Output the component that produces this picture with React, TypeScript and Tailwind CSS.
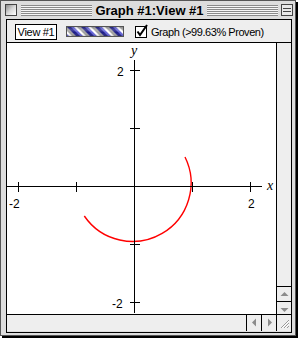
import React from "react";

function Stripes() {
  return (
    <div className="h-[11px] flex-1 bg-[repeating-linear-gradient(to_bottom,#8a8a8a_0px,#8a8a8a_1px,#f6f6f6_1px,#f6f6f6_2px)]" />
  );
}

function BarberPole() {
  return (
    <svg width="58" height="11" className="block">
      <defs>
        <pattern id="pole" width="14" height="11" patternUnits="userSpaceOnUse" patternTransform="skewX(45)">
          <rect x="0" y="0" width="4" height="11" fill="#1c1c86" />
          <rect x="4" y="0" width="3" height="11" fill="#6262d8" />
          <rect x="7" y="0" width="3" height="11" fill="#ffffff" />
          <rect x="10" y="0" width="4" height="11" fill="#a0a0a0" />
        </pattern>
        <linearGradient id="shade" x1="0" y1="0" x2="0" y2="1">
          <stop offset="0" stopColor="#000" stopOpacity="0.2" />
          <stop offset="0.35" stopColor="#fff" stopOpacity="0.2" />
          <stop offset="0.6" stopColor="#fff" stopOpacity="0" />
          <stop offset="1" stopColor="#000" stopOpacity="0.3" />
        </linearGradient>
      </defs>
      <rect x="0" y="0" width="58" height="11" fill="url(#pole)" />
      <rect x="0" y="0" width="58" height="11" fill="url(#shade)" />
      <rect x="0.5" y="0.5" width="57" height="10" fill="none" stroke="#555" />
    </svg>
  );
}

function CheckBox() {
  return (
    <svg width="14" height="13" className="block overflow-visible">
      <rect x="0.5" y="1.5" width="11" height="11" fill="#fff" stroke="#000" />
      <path d="M2.5 6.5 L5 10 L12 0" fill="none" stroke="#000" strokeWidth="2" />
    </svg>
  );
}

function Arrow({ dir }: { dir: "up" | "down" | "left" | "right" }) {
  const d = {
    up: "M3.5 9 L7.5 5 L11.5 9 Z",
    down: "M3.5 6 L7.5 10 L11.5 6 Z",
    left: "M9 3.5 L5 7.5 L9 11.5 Z",
    right: "M6 3.5 L10 7.5 L6 11.5 Z",
  }[dir];
  return (
    <svg width="14" height="14" className="block">
      <path d={d} fill="#8c8c8c" />
    </svg>
  );
}

function Plot() {
  const ox = 127.5;
  const oy = 143.5;
  const u = 58;
  const xt = [-2, -1, 1, 2];
  return (
    <svg width="269" height="271" className="block">
      <path d="M 178 114 A 58.5 58.5 0 0 1 77.3 173" fill="none" stroke="#ff0000" strokeWidth="1.4" />
      <g stroke="#000" strokeWidth="1" shapeRendering="crispEdges">
        <line x1="0" y1={oy} x2="255" y2={oy} />
        <line x1={ox} y1="17" x2={ox} y2="270" />
        {xt.map((t) => (
          <line key={"x" + t} x1={ox + t * u} y1={oy - 5} x2={ox + t * u} y2={oy + 5} />
        ))}
        {xt.map((t) => (
          <line key={"y" + t} x1={ox - 5} y1={oy - t * u} x2={ox + 5} y2={oy - t * u} />
        ))}
      </g>
      <g fontFamily="'Liberation Sans', Arial, sans-serif" fontSize="12" fill="#000">
        <text x="2" y="165">-2</text>
        <text x="241" y="165">2</text>
        <text x="110" y="33">2</text>
        <text x="105" y="265">-2</text>
      </g>
      <g fontFamily="'Liberation Serif', 'Times New Roman', serif" fontStyle="italic" fontSize="14" fill="#000">
        <text x="260" y="147">x</text>
        <text x="124" y="12">y</text>
      </g>
    </svg>
  );
}

export default function App() {
  return (
    <div className="h-[338px] w-[298px] bg-white font-['Liberation_Sans',Arial,sans-serif]">
      <div className="flex h-[336px] w-[296px] flex-col border border-[#555] bg-[#dddddd] shadow-[2px_2px_0_0_#000]">
        {/* title bar */}
        <div className="flex h-[18px] items-center pl-[4px] pr-[2px]">
          <div className="h-[12px] w-[12px] border border-[#444] bg-gradient-to-br from-[#8a8a8a] via-[#d8d8d8] to-[#ffffff]" />
          <div className="ml-[4px] flex flex-1 items-center">
            <Stripes />
            <span className="px-[3px] text-[13px] font-bold leading-none text-black">Graph #1:View #1</span>
            <Stripes />
          </div>
          <div className="ml-[3px] flex h-[12px] w-[12px] flex-col justify-center gap-[2px] border border-[#444] bg-[#e8e8e8] px-[1px]">
            <div className="h-[1px] bg-[#444]" />
            <div className="h-[1px] bg-[#444]" />
          </div>
        </div>

        {/* content */}
        <div className="mb-[2px] ml-[5px] mr-[3px] flex flex-1 flex-col border border-black">
          {/* toolbar */}
          <div className="flex h-[23px] items-start border-b border-black bg-[#eeeeee] pl-[8px] text-[11px] leading-none text-black">
            <div className="mt-[4px] flex h-[16px] w-[42px] items-center justify-center border border-black bg-white tracking-[-0.3px]">
              View #1
            </div>
            <div className="ml-[9px] mt-[6px]">
              <BarberPole />
            </div>
            <div className="ml-[11px] mt-[5px]">
              <CheckBox />
            </div>
            <span className="ml-[2px] mt-[7px] tracking-[-0.45px]">Graph (&gt;99.63% Proven)</span>
          </div>

          {/* plot + vertical scrollbar */}
          <div className="flex h-[271px]">
            <div className="flex-1 bg-white">
              <Plot />
            </div>
            <div className="flex w-[15px] flex-col border-l border-black bg-[#eeeeee]">
              <div className="flex-1" />
              <div className="h-[15px] border-t border-black">
                <Arrow dir="up" />
              </div>
              <div className="h-[13px] border-t border-black">
                <Arrow dir="down" />
              </div>
            </div>
          </div>

          {/* horizontal scrollbar */}
          <div className="flex h-[17px] border-t border-black bg-[#eeeeee]">
            <div className="flex-1" />
            <div className="w-[15px] border-l border-black">
              <Arrow dir="left" />
            </div>
            <div className="w-[15px] border-l border-black">
              <Arrow dir="right" />
            </div>
            <div className="w-[15px] border-l border-black">
              <svg width="14" height="16" className="block">
                <g strokeWidth="1">
                  <path d="M4 13 L12 5" stroke="#999" />
                  <path d="M5 13 L12 6" stroke="#fff" />
                  <path d="M7 13 L12 8" stroke="#999" />
                  <path d="M8 13 L12 9" stroke="#fff" />
                  <path d="M10 13 L12 11" stroke="#999" />
                </g>
              </svg>
            </div>
          </div>
        </div>
      </div>
    </div>
  );
}
